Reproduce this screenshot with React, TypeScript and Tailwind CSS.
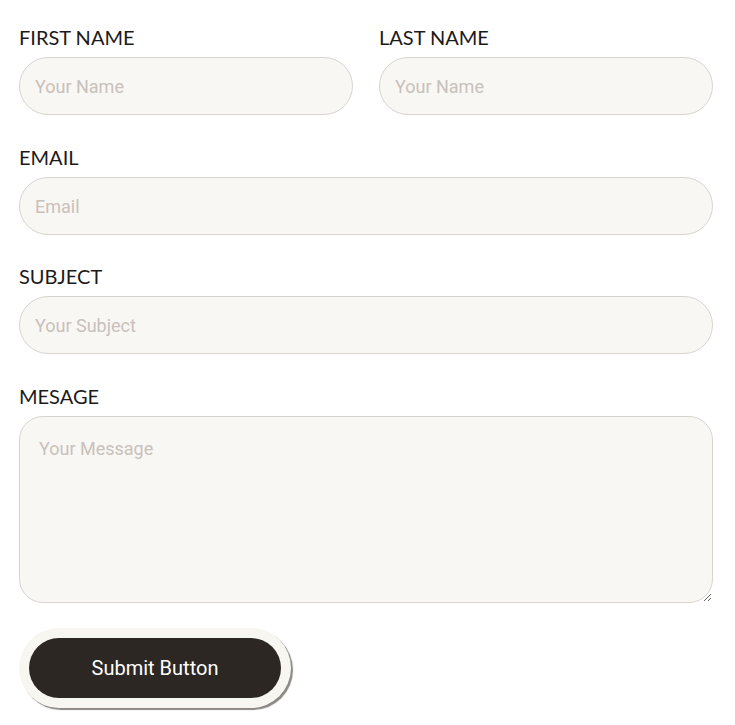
const labelCls =
  "block h-[31px] pt-[3px] text-[20px] leading-7 text-[#1c1a19] font-['Lato',sans-serif]";
const fieldCls =
  "w-full bg-[#f9f7f3] border border-[#d8d5d0] text-[18px] text-[#2d2724] placeholder:text-[#c8c1bc] font-['Roboto',sans-serif] outline-none";

function Field({ label, placeholder, className = "" }: { label: string; placeholder: string; className?: string }) {
  return (
    <div className={className}>
      <label className={labelCls}>{label}</label>
      <input type="text" placeholder={placeholder} className={`${fieldCls} mt-[6px] h-[58px] rounded-full px-[15px]`} />
    </div>
  );
}

export default function App() {
  return (
    <div className="w-[735px] h-[725px] bg-white pl-[19px] pr-[22px] pt-5">
      <form className="flex flex-col">
        <div className="flex gap-[26px]">
          <Field label="FIRST NAME" placeholder="Your Name" className="flex-1" />
          <Field label="LAST NAME" placeholder="Your Name" className="flex-1" />
        </div>
        <Field label="EMAIL" placeholder="Email" className="mt-[25px]" />
        <Field label="SUBJECT" placeholder="Your Subject" className="mt-6" />
        <div className="mt-[25px]">
          <label className={labelCls}>MESAGE</label>
          <textarea
            placeholder="Your Message"
            className={`${fieldCls} block mt-[6px] h-[187px] rounded-[24px] px-[19px] py-[18px] resize-y`}
          />
        </div>
        <div className="mt-[25px]">
          <div className="inline-flex p-[10px] rounded-full bg-[#f8f6f1] shadow-[2px_2px_1px_#8a8784]">
            <button
              type="button"
              className="w-[252px] h-[60px] rounded-full bg-[#2d2724] text-white text-[20px] font-['Roboto',sans-serif]"
            >
              Submit Button
            </button>
          </div>
        </div>
      </form>
    </div>
  );
}
